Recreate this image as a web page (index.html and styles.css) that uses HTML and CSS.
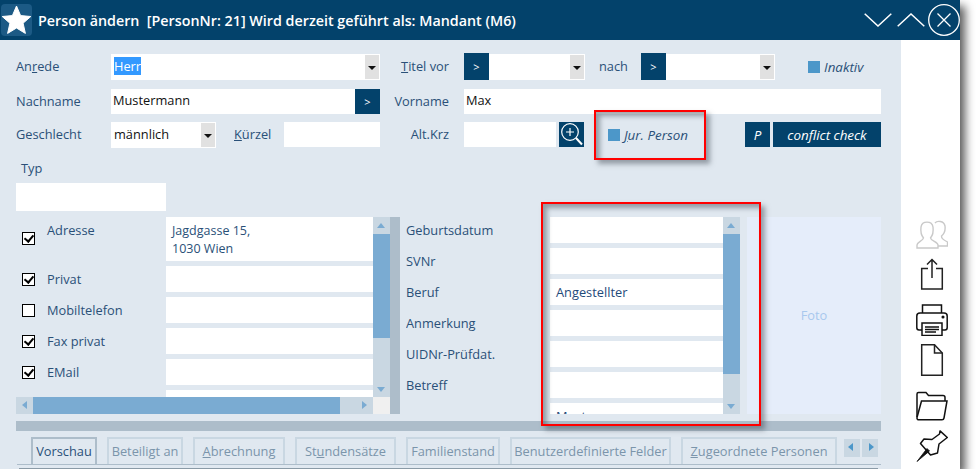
FILE: index.html
```html
<!DOCTYPE html>
<html lang="de">
<head>
<meta charset="utf-8">
<title>Person ändern</title>
<link rel="stylesheet" href="styles.css">
</head>
<body>
<div class="fenster">
  <div class="titelleiste">
    <div class="logo">
      <svg width="31" height="32" viewBox="0 0 31 32"><path d="M15.5 2 L19.6 11.6 L29.8 12.5 L22.1 19.2 L24.4 29.4 L15.5 24 L6.6 29.4 L8.9 19.2 L1.2 12.5 L11.4 11.6 Z" fill="#fff" stroke="#fff" stroke-linejoin="round"/></svg>
    </div>
    <div class="titel">Person ändern&nbsp; [PersonNr: 21] Wird derzeit geführt als: Mandant (M6)</div>
    <svg class="fensterknopf knopf-runter" width="28" height="14" viewBox="0 0 28 14"><path d="M.7 .7 L14 13 L27.3 .7" fill="none" stroke="#fff" stroke-width="1.5"/></svg>
    <svg class="fensterknopf knopf-hoch" width="28" height="14" viewBox="0 0 28 14"><path d="M.7 13.3 L14 1 L27.3 13.3" fill="none" stroke="#fff" stroke-width="1.5"/></svg>
    <svg class="fensterknopf knopf-zu" width="32" height="32" viewBox="0 0 32 32"><circle cx="16" cy="16" r="15.3" fill="none" stroke="#fff" stroke-width="1.3"/><path d="M9.5 9.5 L22.5 22.5 M22.5 9.5 L9.5 22.5" stroke="#fff" stroke-width="1.3"/></svg>
  </div>

  <div class="inhalt">
    <div class="formular">
      <div class="zeile zeile1">
        <label class="lbl b95">An<u>r</u>ede</label>
        <div class="combo b269"><span class="auswahl">Herr</span><i class="pfeil"></i></div>
        <label class="lbl lbl-r b69"><u>T</u>itel vor</label>
        <button class="btn btn-pfeil abst15">&gt;</button>
        <div class="combo b96"><i class="pfeil"></i></div>
        <label class="lbl b42 abst14">nach</label>
        <button class="btn btn-pfeil">&gt;</button>
        <div class="combo b109"><i class="pfeil"></i></div>
        <span class="haken abst33"></span>
        <label class="lbl kursiv abst4">Inaktiv</label>
      </div>
      <div class="zeile zeile2">
        <label class="lbl b95">Nachname</label>
        <div class="feld b244">Mustermann</div>
        <button class="btn btn-pfeil">&gt;</button>
        <label class="lbl lbl-r b69">Vorname</label>
        <div class="feld b417 abst15">Max</div>
      </div>
      <div class="zeile zeile3">
        <label class="lbl b95">Geschlecht</label>
        <div class="combo b105"><span class="hoeher">männlich</span><i class="pfeil"></i></div>
        <label class="lbl b50 abst18"><u>K</u>ürzel</label>
        <div class="feld b96"></div>
        <label class="lbl lbl-r b69">Alt.Krz</label>
        <div class="feld b92 abst15"></div>
        <button class="btn btn-lupe">
          <svg width="25" height="25" viewBox="0 0 25 25"><circle cx="11" cy="10" r="8.3" fill="none" stroke="#fff" stroke-width="1.2"/><path d="M17 16 L23 22.5" stroke="#fff" stroke-width="2"/><path d="M11 6 V14 M7 10 H15" stroke="#fff" stroke-width="1.2"/></svg>
        </button>
        <span class="haken abst24"></span>
        <label class="lbl kursiv abst4 b121"><u>J</u>ur. Person</label>
        <button class="btn btn-p kursiv">P</button>
        <button class="btn btn-conflict kursiv">conflict check</button>
      </div>

      <label class="lbl typ">Typ</label>
      <div class="feld typfeld"></div>

      <div class="mitte">
        <div class="scrollbox links">
          <div class="scrollinhalt">
            <div class="kontakt hoch"><span class="cb an cb-tief"></span><label class="lbl kontakt-lbl oben">Adresse</label><div class="feld feld-block">Jagdgasse 15,<br>1030 Wien</div></div>
            <div class="kontakt"><span class="cb an"></span><label class="lbl kontakt-lbl">Privat</label><div class="feld feld-block"></div></div>
            <div class="kontakt"><span class="cb"></span><label class="lbl kontakt-lbl">Mobiltelefon</label><div class="feld feld-block"></div></div>
            <div class="kontakt"><span class="cb an"></span><label class="lbl kontakt-lbl">Fax privat</label><div class="feld feld-block"></div></div>
            <div class="kontakt"><span class="cb an"></span><label class="lbl kontakt-lbl">EMail</label><div class="feld feld-block"></div></div>
            <div class="kontakt"><span class="cb"></span><label class="lbl kontakt-lbl"></label><div class="feld feld-block"></div></div>
          </div>
          <div class="vscroll"><i class="pf pf-hoch"></i><b class="thumb thumb-l"></b><i class="pf pf-runter"></i></div>
          <div class="hscroll"><i class="pf pf-links"></i><b class="hthumb"></b><i class="pf pf-rechts"></i></div>
          <div class="ecke"></div>
        </div>
        <div class="teiler"></div>
        <div class="scrollbox rechts">
          <div class="scrollinhalt">
            <div class="daten"><label class="lbl daten-lbl">Geburtsdatum</label><div class="feld feld-block"></div></div>
            <div class="daten"><label class="lbl daten-lbl">SVNr</label><div class="feld feld-block"></div></div>
            <div class="daten"><label class="lbl daten-lbl">Beruf</label><div class="feld feld-block blau">Angestellter</div></div>
            <div class="daten"><label class="lbl daten-lbl">Anmerkung</label><div class="feld feld-block"></div></div>
            <div class="daten"><label class="lbl daten-lbl">UIDNr-Prüfdat.</label><div class="feld feld-block"></div></div>
            <div class="daten"><label class="lbl daten-lbl">Betreff</label><div class="feld feld-block"></div></div>
            <div class="daten"><label class="lbl daten-lbl"></label><div class="feld feld-block blau">Muster</div></div>
          </div>
          <div class="vscroll"><i class="pf pf-hoch"></i><b class="thumb thumb-r"></b><i class="pf pf-runter"></i></div>
        </div>
        <div class="foto">Foto</div>
      </div>

      <div class="trenner"></div>

      <div class="reiter">
        <div class="tab aktiv">Vorschau</div>
        <div class="tab b76">Beteiligt an</div>
        <div class="tab b92x"><u>A</u>brechnung</div>
        <div class="tab b101">St<u>u</u>ndensätze</div>
        <div class="tab b94">Familienstand</div>
        <div class="tab b161">Benutzerdefinierte Felder</div>
        <div class="tab b156"><u>Z</u>ugeordnete Personen</div>
        <div class="tabpfeile"><span class="tabpf"><i class="pf pf-links dunkel"></i></span><span class="tabpf"><i class="pf pf-rechts dunkel"></i></span></div>
      </div>
      <div class="reiterlinie"></div>
    </div>

    <div class="seite">
      <svg class="icon i1" width="32" height="32" viewBox="0 0 32 32" fill="none" stroke="#c9c9c9" stroke-width="1.4"><path d="M19 4 C21 1.5 28 1.5 29 7 C29.5 11 28 15 25.5 17 C25.5 19 26 20 31.5 23 V27 H22"/><path d="M1 29 H22 V26 C22 23 15 22 14.5 19 C17 16 17.5 12 17 8 C16 1.500 6 1.500 5 8 C4.500 12 5 16 7.500 19 C7 22 1 23 1 26 Z"/></svg>
      <svg class="icon i2" width="32" height="32" viewBox="0 0 32 32" fill="none" stroke="#222" stroke-width="1.5"><path d="M12 10.500 H5.700 V31 H26.300 V10.500 H20"/><path d="M16 20 V1.500 M11 6.500 L16 1.500 L21 6.500"/></svg>
      <svg class="icon i3" width="32" height="32" viewBox="0 0 32 32" fill="none" stroke="#111" stroke-width="1.5"><path d="M6.500 9 V1 H25.500 V9"/><path d="M6 26 H3 C1.500 26 .8 25 .8 23.500 V12 C.8 10 2 9 4 9 H28 C30 9 31.200 10 31.200 12 V23.500 C31.200 25 30.500 26 29 26 H26"/><path d="M6 19 H26 V31.500 H6 Z" fill="#fff"/><path d="M9 23 H23 M9 25.500 H23 M9 28 H20"/><circle cx="27" cy="13" r=".8" fill="#111"/></svg>
      <svg class="icon i4" width="32" height="32" viewBox="0 0 32 32" fill="none" stroke="#222" stroke-width="1.5"><path d="M5.700 .8 H18.500 L26.300 9 V31.300 H5.700 Z"/><path d="M18.500 .8 V9 H26.300"/></svg>
      <svg class="icon i5" width="32" height="32" viewBox="0 0 32 32" fill="none" stroke="#111" stroke-width="1.5"><path d="M1 27 V4 C1 3 1.500 2.500 2.500 2.500 H10 L12.500 5.500 H27 C28.500 5.500 29 6 29 7.500 V11"/><path d="M5.500 11 H31 L28 28 C27.800 29.300 27 29.800 26 29.800 H3 C1.500 29.800 .8 29 1 27.500 Z"/></svg>
      <svg class="icon i6" width="32" height="32" viewBox="0 0 32 32" fill="none" stroke="#111" stroke-width="1.5"><path d="M24 .9 L31.300 7.500 L23 14 L21.500 23 L14.500 25 L4.500 13.500 L8 9 L16 9.500 L23.500 4 Z" stroke-linejoin="round"/><path d="M1 31.500 L11 18.500 L13.500 21 Z" fill="#111" stroke-width=".8"/></svg>
    </div>
  </div>

  <div class="rahmen rahmen1"></div>
  <div class="rahmen rahmen2"></div>
</div>
</body>
</html>
```

FILE: styles.css
```css
*{
    box-sizing:border-box;
    margin:0;
    padding:0;
}
html, body{
    width:976px;
    height:469px;
    overflow:hidden;
    background:#fff;
}
body{
    font-family:"Open Sans", sans-serif;
    font-size:12.8px;
    color:#2a5078;
}
.fenster{
    position:relative;
    width:960px;
    height:469px;
    display:flex;
    flex-direction:column;
    box-shadow:5px 6px 9px rgba(0,0,0,.65);
}

/* Titelleiste */
.titelleiste{
    height:40px;
    background:#03426b;
    display:flex;
    align-items:center;
    flex:none;
}
.logo{
    width:31px;
    height:32px;
    margin-left:1px;
    background:#1c5a85;
    border-radius:4px;
}
.titel{
    margin-left:6px;
    color:#fff;
    font-weight:600;
    font-size:14.3px;
    width:826px;
    white-space:nowrap;
}
.knopf-hoch{margin-left:5px;}
.knopf-zu{margin-left:3px;}

/* Inhalt */
.inhalt{
    flex:1;
    display:flex;
    min-height:0;
}
.formular{
    width:901px;
    background:#e0e8f0;
    padding:13px 20px 0 16px;
}
.seite{
    flex:1;
    background:#fff;
    padding:179px 0 0 15px;
    display:flex;
    flex-direction:column;
}
.icon{flex:none;}
.i2{margin-top:7px;}
.i3{margin-top:14px;}
.i4{margin-top:8px;}
.i5{margin-top:14px;}
.i6{margin-top:8px;}

.zeile{display:flex;align-items:center;}
.zeile1{height:27px;}
.zeile2{height:25px;margin-top:9px;}
.zeile3{height:25px;margin-top:8px;}
.zeile .lbl{margin-top:-2px;}

.lbl{
    display:block;
    flex:none;
    white-space:nowrap;
}
.lbl-r{text-align:right;}
.kursiv{font-style:italic;font-size:13.4px;}
.zeile .kursiv{margin-top:0;}

.b95{width:95px;}
.b269{width:269px;}
.b69{width:69px;}
.b96{width:96px;}
.b42{width:42px;}
.b109{width:109px;}
.b244{width:244px;}
.b417{width:417px;}
.b105{width:105px;}
.b50{width:50px;}
.b92{width:92px;}
.b121{width:121px;}
.abst4{margin-left:4px;}
.abst14{margin-left:14px;}
.abst15{margin-left:15px;}
.abst18{margin-left:18px;}
.abst24{margin-left:24px;}
.abst33{margin-left:33px;}

.combo{
    flex:none;
    height:26px;
    background:#fff;
    display:flex;
    align-items:center;
    justify-content:space-between;
    padding:1px 1px 1px 3px;
    color:#111;
}
.combo .pfeil{
    margin-left:auto;
    width:14px;
    height:24px;
    background:#e1e1e1;
    position:relative;
}
.pfeil::after{
    content:"";
    position:absolute;
    left:3px;
    top:11px;
    border-left:4px solid transparent;
    border-right:4px solid transparent;
    border-top:4px solid #111;
}
.hoeher{margin-top:-2px;}
.auswahl{
    background:#3399ff;
    color:#fff;
    line-height:18px;
    margin-top:-1px;
}
.feld{
    flex:none;
    height:25px;
    background:#fff;
    color:#111;
    padding:0 2px;
    line-height:23px;
    white-space:nowrap;
}
.btn{
    flex:none;
    border:0;
    background:#03426b;
    color:#fff;
    font-family:inherit;
    font-size:11px;
}
.btn.kursiv{font-size:13.4px;}
.btn-pfeil{width:25px;height:100%;}
.btn-lupe{width:25px;height:25px;margin-left:3px;display:block;}
.btn-p{width:25px;height:25px;}
.btn-conflict{width:108px;height:25px;margin-left:3px;}

.haken{
    flex:none;
    width:12px;
    height:12px;
    background:#4c97c9;
}

.typ{
    margin:12px 0 0 5px;
    height:24px;
    line-height:18px;
}
.typfeld{
    width:150px;
    height:28px;
}

/* mittlerer Bereich */
.mitte{
    display:flex;
    height:197px;
    margin-top:6px;
}
.scrollbox{
    position:relative;
    overflow:hidden;
    height:197px;
    flex:none;
}
.links{width:374px;}
.rechts{width:334px;margin-left:6px;}
.scrollinhalt{
    height:100%;
    overflow:hidden;
}
.links .scrollinhalt{height:180px;width:357px;}
.rechts .scrollinhalt{width:317px;}

.kontakt{
    display:flex;
    height:26px;
    margin-bottom:5px;
    align-items:center;
}
.kontakt.hoch{height:44px;align-items:flex-start;}
.cb{
    flex:none;
    width:13px;
    height:13px;
    margin-left:6px;
    background:#fff;
    border:1px solid #000;
    position:relative;
}
.cb.an::after{
    content:"";
    position:absolute;
    left:3px;
    top:0;
    width:4px;
    height:7px;
    border-right:2px solid #000;
    border-bottom:2px solid #000;
    transform:rotate(40deg);
}
.cb-tief{margin-top:15px;}
.kontakt-lbl{width:119px;margin-left:12px;}
.oben{padding-top:4px;}
.feld-block{width:207px;height:100%;padding:3px 6px;line-height:18px;}
.kontakt .feld-block{flex:1;}
.hoch .feld-block{padding-top:5px;line-height:17.5px;font-size:12.5px;color:#2a5078;}

.daten{
    display:flex;
    height:26px;
    margin-bottom:5px;
    align-items:center;
}
.daten-lbl{width:144px;}
.daten .feld-block{flex:1;padding-top:4px;}
.blau{color:#1f4a7a;}

.vscroll{
    position:absolute;
    top:0;
    right:0;
    bottom:0;
    width:17px;
    background:#c9d7e2;
}
.links .vscroll{bottom:17px;}
.thumb{
    position:absolute;
    left:0;
    top:17px;
    width:17px;
    background:#7aabd2;
}
.thumb-l{height:104px;}
.thumb-r{height:140px;}
.hscroll{
    position:absolute;
    left:0;
    bottom:0;
    width:357px;
    height:17px;
    background:#c9d7e2;
}
.hthumb{
    position:absolute;
    left:17px;
    top:0;
    width:307px;
    height:17px;
    background:#7aabd2;
}
.ecke{
    position:absolute;
    right:0;
    bottom:0;
    width:17px;
    height:17px;
    background:#f0f0f0;
}

.pf{position:absolute;width:0;height:0;}
.pf-hoch{
    left:4px;
    top:6px;
    border-left:4.5px solid transparent;
    border-right:4.5px solid transparent;
    border-bottom:5px solid #7aabd2;
}
.pf-runter{
    left:4px;
    bottom:5px;
    border-left:4.5px solid transparent;
    border-right:4.5px solid transparent;
    border-top:5px solid #7aabd2;
}
.pf-links{
    left:6px;
    top:4px;
    border-top:4.5px solid transparent;
    border-bottom:4.5px solid transparent;
    border-right:5px solid #7aabd2;
}
.pf-rechts{
    right:6px;
    top:4px;
    border-top:4.5px solid transparent;
    border-bottom:4.5px solid transparent;
    border-left:5px solid #7aabd2;
}

.teiler{
    flex:none;
    width:10px;
    background:#adbdca;
}
.foto{
    flex:none;
    width:134px;
    margin-left:7px;
    padding-bottom:2px;
    background:#e5edfa;
    color:#a8c8ee;
    display:flex;
    align-items:center;
    justify-content:center;
}

.trenner{
    height:10px;
    margin-top:7px;
    background:#adbdca;
}

/* Reiter */
.reiter{
    display:flex;
    height:28px;
    margin:6px 0 0 1px;
    padding-left:14px;
    border-bottom:1px solid #adbdca;
}
.tab{
    flex:none;
    height:27px;
    margin-right:10px;
    border:2px solid #c9d7e2;
    border-bottom:0;
    color:#7b95ab;
    text-align:center;
    line-height:25px;
    white-space:nowrap;
}
.tab.aktiv{
    width:66px;
    height:28px;
    border-color:#adbdca;
    color:#2a5078;
    position:relative;
}
.b76{width:76px;}
.b92x{width:92px;}
.b101{width:101px;}
.b94{width:94px;}
.b161{width:161px;}
.b156{width:156px;}
.tabpfeile{
    display:flex;
    gap:2px;
    margin:2px 0 0 -3px;
}
.tabpf{
    position:relative;
    width:16px;
    height:18px;
    background:#c9d7e2;
}
.dunkel.pf-links{border-right-color:#4c97c9;left:4px;top:4px;}
.dunkel.pf-rechts{border-left-color:#4c97c9;right:4px;top:4px;}
.reiterlinie{
    height:1px;
    margin:3px 3px 0 3px;
    background:#8a9aa6;
}

/* rote Markierungen */
.rahmen{
    position:absolute;
    border:2px solid #f00;
    box-shadow:4px 4px 5px rgba(70,80,90,.5), inset 4px 4px 5px rgba(70,80,90,.5);
}
.rahmen1{left:594px;top:110px;width:112px;height:50px;}
.rahmen2{left:541px;top:202px;width:220px;height:224px;}
```
